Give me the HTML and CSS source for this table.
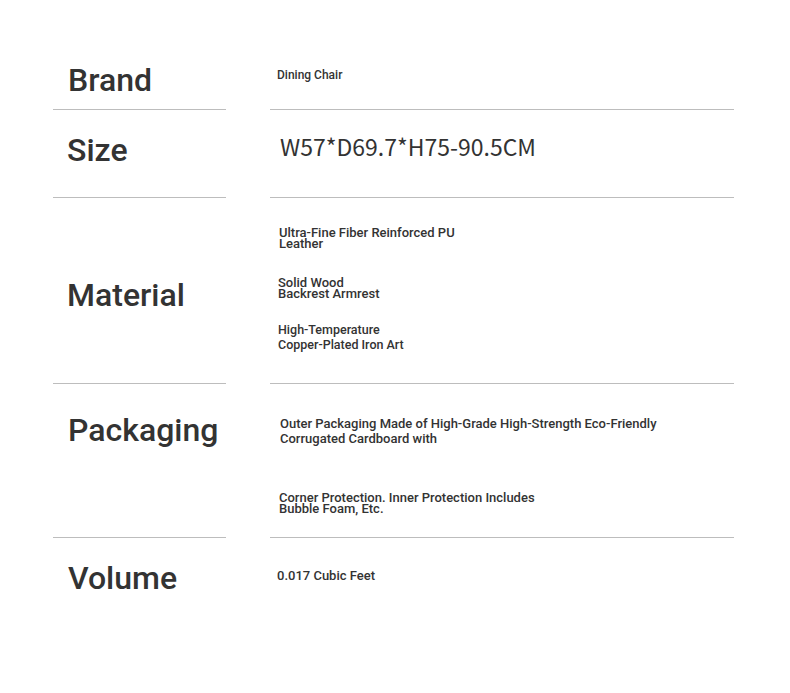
FILE: index.html
```html
<!DOCTYPE html>
<html lang="en">
<head>
    <meta charset="UTF-8">
    <meta name="viewport" content="width=device-width, initial-scale=1.0">
    <title>Dining Chair Specifications</title>
    <link rel="stylesheet" href="styles.css">
</head>
<body>
    <div class="spec">
        <div class="row row-brand">
            <div class="label">Brand</div>
            <div class="value">
                <p class="txt-brand">Dining Chair</p>
            </div>
        </div>

        <div class="row row-size">
            <div class="label">Size</div>
            <div class="value">
                <p class="txt-size">W57*D69.7*H75-90.5CM</p>
            </div>
        </div>

        <div class="row row-material">
            <div class="label">Material</div>
            <div class="value">
                <p class="tight">Ultra-Fine Fiber Reinforced PU<br>Leather</p>
                <p class="tight m-wood">Solid Wood<br>Backrest Armrest</p>
                <p class="loose m-iron">High-Temperature<br>Copper-Plated Iron Art</p>
            </div>
        </div>

        <div class="row row-pack">
            <div class="label">Packaging</div>
            <div class="value">
                <p class="loose">Outer Packaging Made of High-Grade High-Strength Eco-Friendly<br>Corrugated Cardboard with</p>
                <p class="tight p-corner">Corner Protection. Inner Protection Includes<br>Bubble Foam, Etc.</p>
            </div>
        </div>

        <div class="row row-volume last">
            <div class="label">Volume</div>
            <div class="value">
                <p class="txt-volume">0.017 Cubic Feet</p>
            </div>
        </div>
    </div>
</body>
</html>
```

FILE: styles.css
```css
html, body {
    margin: 0;
    padding: 0;
    background: #fff;
}
body {
    font-family: Roboto, "Liberation Sans", Arial, sans-serif;
    color: #333;
}
.spec {
    padding: 50px 0 0 53px;
}
.row {
    display: grid;
    grid-template-columns: 173px 464px;
    column-gap: 44px;
}
.row > div {
    border-bottom: 1px solid #bdbdbd;
}
.row.last > div {
    border-bottom: none;
}
p {
    margin: 0;
}

/* left column */
.label {
    font-size: 32px;
    font-weight: 500;
    line-height: 40px;
    padding-left: 14px;
    color: #333;
}
.row-brand { height: 60px; }
.row-size { height: 88px; }
.row-material { height: 186px; }
.row-pack { height: 154px; }
.row-volume { height: 100px; }

.row-brand .label { padding-top: 10px; padding-left: 15px; }
.row-size .label { padding-top: 20px; }
.row-material .label { padding-top: 77px; }
.row-pack .label { padding-top: 26px; padding-left: 15px; }
.row-volume .label { padding-top: 20px; padding-left: 15px; }

/* right column */
.value {
    padding-left: 9px;
    font-weight: 500;
}
.txt-brand {
    font-size: 12px;
    line-height: 14px;
    padding-top: 18px;
    margin-left: -2px;
}
.txt-size {
    font-family: "Noto Sans CJK SC", "Noto Sans", sans-serif;
    font-weight: 400;
    font-size: 23px;
    line-height: 24px;
    padding-top: 24px;
    margin-left: 1px;
    color: #333;
}
.tight {
    font-size: 13px;
    line-height: 10.5px;
}
.loose {
    font-size: 12.5px;
    line-height: 14.5px;
}
.row-material .value p:first-child {
    padding-top: 30px;
}
.m-wood {
    margin-top: 29px;
    margin-left: -1px;
}
.m-iron {
    margin-top: 24px;
    margin-left: -1px;
}
.row-pack .value .loose {
    font-size: 13px;
    padding-top: 33px;
    margin-left: 1px;
}
.p-corner {
    margin-top: 47px;
}
.txt-volume {
    font-size: 13px;
    line-height: 15px;
    padding-top: 30px;
    margin-left: -2px;
}
```
